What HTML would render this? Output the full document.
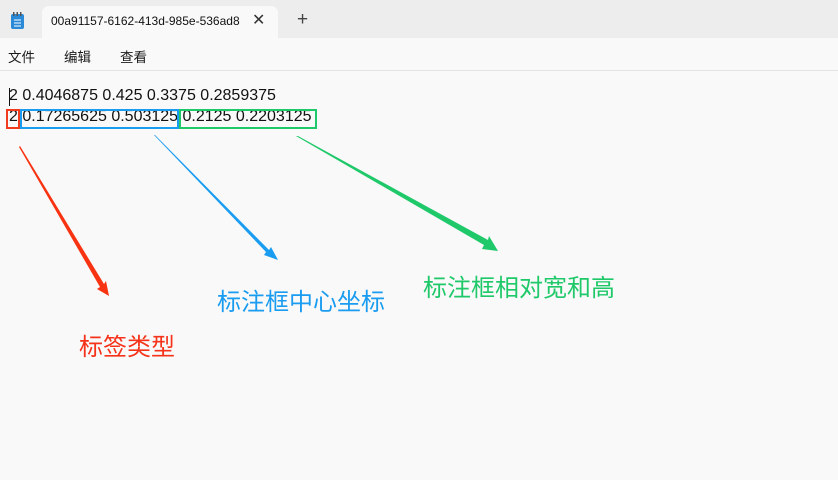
<!DOCTYPE html>
<html><head><meta charset="utf-8"><style>
body{margin:0;width:838px;height:480px;background:#f9f9f9;font-family:"Liberation Sans","Noto Sans CJK SC",sans-serif;position:relative;overflow:hidden}
.top{position:absolute;left:0;top:0;width:838px;height:38px;background:#ededed}
.tab{position:absolute;left:42px;top:6px;width:236px;height:32px;background:#f9f9f9;border-radius:7px 7px 0 0}
.menu{position:absolute;top:38px;left:0;width:838px;height:32px;border-bottom:1px solid #e3e3e3;font-size:13.5px;color:#1a1a1a}
.abs{position:absolute;white-space:nowrap}
.line{font-size:16px;color:#111}
.lbl{font-size:24px;position:absolute;white-space:nowrap}
</style></head><body>
<div class="top"></div>
<div class="tab"></div>
<svg class="abs" style="left:10px;top:12px" width="16" height="18"><rect x="1" y="2" width="13" height="15" rx="2" fill="#2a8ad8"/><rect x="3" y="0" width="1.5" height="4" fill="#555"/><rect x="6.5" y="0" width="1.5" height="4" fill="#555"/><rect x="10" y="0" width="1.5" height="4" fill="#555"/><line x1="4" y1="8" x2="11" y2="8" stroke="#fff"/><line x1="4" y1="11" x2="11" y2="11" stroke="#fff"/><line x1="4" y1="14" x2="11" y2="14" stroke="#fff"/></svg>
<div class="abs" style="left:51px;top:14px;font-size:12px;color:#111">00a91157-6162-413d-985e-536ad8</div>
<div class="abs" style="left:252px;top:10px;font-size:16px;color:#333">✕</div>
<div class="abs" style="left:297px;top:9px;font-size:19px;color:#444">+</div>
<div class="menu"><span class="abs" style="left:8px;top:8px">文件</span><span class="abs" style="left:64px;top:8px">编辑</span><span class="abs" style="left:120px;top:8px">查看</span></div>
<div class="abs line" style="left:9px;top:87px">2 0.4046875 0.425 0.3375 0.2859375</div>
<div class="abs line" style="left:9px;top:108px">2 0.17265625 0.503125 0.2125 0.2203125</div>
<div class="abs" style="left:9px;top:88px;width:1px;height:18px;background:#111"></div>
<div class="abs" style="left:6px;top:109px;width:10px;height:16px;border:2px solid #f23b1e"></div>
<div class="abs" style="left:20px;top:109px;width:155px;height:16px;border:2px solid #1a9cf0"></div>
<div class="abs" style="left:179px;top:109px;width:134px;height:16px;border:2px solid #1fc96a"></div>
<svg class="abs" style="left:0;top:0" width="838" height="480">
<polygon points="19,147 20,146 104,284 106,281 109,296 97,289 100,287" fill="#f83311"/>
<polygon points="154,135 155,135 269,250 271,247 278,260 264,255 266,252" fill="#1a9cf0"/>
<polygon points="296,136 298,136 488,240 489,236 498,251 482,249 484,245" fill="#1fc96a"/>
</svg>
<div class="lbl" style="left:79px;top:327px;color:#f5331a">标签类型</div>
<div class="lbl" style="left:217px;top:282px;color:#1a9cf0">标注框中心坐标</div>
<div class="lbl" style="left:423px;top:268px;color:#1fc96a">标注框相对宽和高</div>
</body></html>
